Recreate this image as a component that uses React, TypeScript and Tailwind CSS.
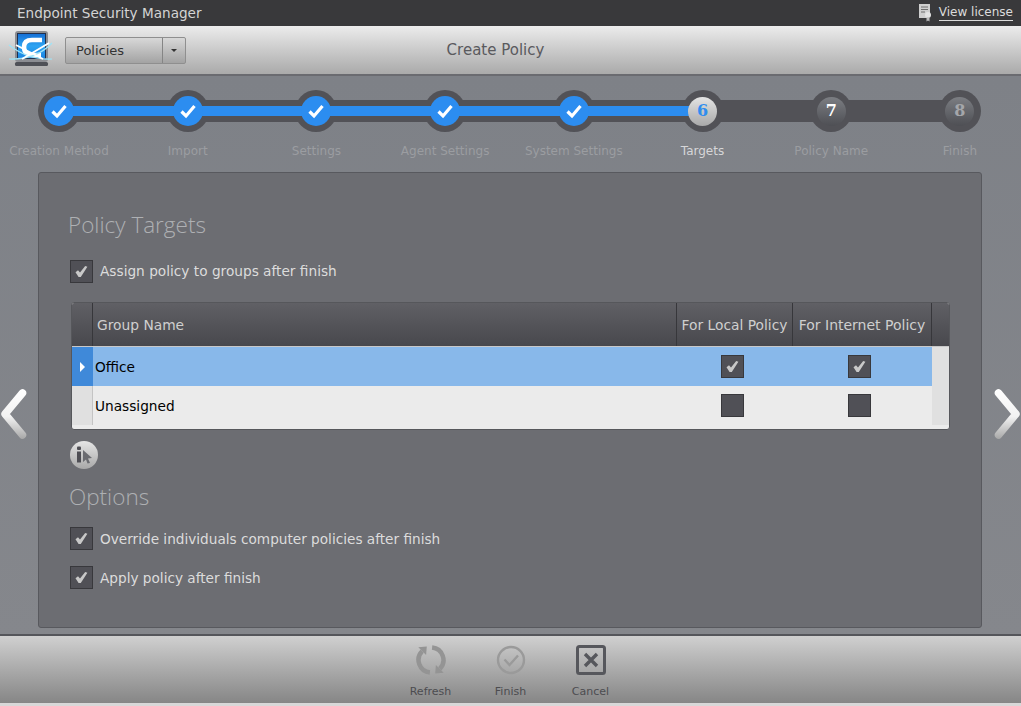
import React from 'react';

const font = 'font-["DejaVu_Sans",sans-serif]';

function StepCheck() {
    return (
        <svg width="18" height="16" viewBox="0 0 18 16" fill="none">
            <path d="M2.5 8.5 L7 13 L15.5 3" stroke="#fff" strokeWidth="3.2" />
        </svg>
    );
}

function Step({ label, state, num }: { label: string; state: 'done' | 'active' | 'next' | 'todo'; num?: number }) {
    return (
        <div className="w-[100px] flex flex-col items-center">
            <div className="w-[42px] h-[42px] rounded-full bg-[#525257] flex items-center justify-center">
                {state === 'done' && (
                    <div className="relative z-10 w-[30px] h-[30px] rounded-full bg-[#2c8df0] flex items-center justify-center">
                        <StepCheck />
                    </div>
                )}
                {state === 'active' && (
                    <div className="relative z-10 w-[29px] h-[29px] rounded-full bg-gradient-to-b from-[#e4e4e4] to-[#a9a9a9] flex items-center justify-center text-[16px] font-bold font-['DejaVu_Serif',serif] text-[#2f8def]">
                        {num}
                    </div>
                )}
                {state === 'next' && (
                    <div className="relative z-10 w-[29px] h-[29px] rounded-full bg-gradient-to-b from-[#7c7e83] to-[#4e4f54] flex items-center justify-center text-[16px] font-bold font-['DejaVu_Serif',serif] text-white">
                        {num}
                    </div>
                )}
                {state === 'todo' && (
                    <div className="relative z-10 w-[29px] h-[29px] rounded-full bg-gradient-to-b from-[#7c7e83] to-[#4e4f54] flex items-center justify-center text-[16px] font-bold font-['DejaVu_Serif',serif] text-[#a4a6aa]">
                        {num}
                    </div>
                )}
            </div>
            <div className={`mt-[11px] text-[12px] leading-[16px] whitespace-nowrap ${state === 'active' ? 'text-[#d6d6d8]' : 'text-[#9b9da1]'}`}>{label}</div>
        </div>
    );
}

function Check({ checked = true }: { checked?: boolean }) {
    return (
        <div className="w-[23px] h-[23px] shrink-0 bg-[#505056] border border-[#38383c] flex items-center justify-center">
            {checked && (
                <svg width="13" height="13" viewBox="0 0 13 13">
                    <path d="M0.5 7.2 L3 5.2 L5 7.4 L10.2 1 L12.4 1.8 L5.8 12 L3.6 12 Z" fill="#c8c8c8" />
                </svg>
            )}
        </div>
    );
}

function Chevron({ dir }: { dir: 'left' | 'right' }) {
    return (
        <svg width="28" height="52" viewBox="0 0 28 52" fill="none">
            <defs>
                <linearGradient id={`chev-${dir}`} gradientUnits="userSpaceOnUse" x1="0" y1="0" x2="0" y2="52">
                    <stop offset="0" stopColor="#ffffff" />
                    <stop offset="0.55" stopColor="#f2f2f2" />
                    <stop offset="1" stopColor="#a4a4a4" />
                </linearGradient>
            </defs>
            <path
                d={dir === 'left' ? 'M22.5 5 L5 26 L22.5 47' : 'M5.5 5 L23 26 L5.5 47'}
                stroke={`url(#chev-${dir})`}
                strokeWidth="7.5"
                strokeLinecap="round"
                strokeLinejoin="round"
            />
        </svg>
    );
}

function Logo() {
    return (
        <svg width="46" height="40" viewBox="0 0 46 40" fill="none">
            <defs>
                <linearGradient id="logo-screen" x1="0" y1="0" x2="0" y2="1">
                    <stop offset="0" stopColor="#1670d6" />
                    <stop offset="0.5" stopColor="#2ea4f2" />
                    <stop offset="1" stopColor="#1b86e2" />
                </linearGradient>
            </defs>
            <rect x="7" y="1" width="33" height="31" rx="3" fill="#8b8d92" />
            <rect x="9" y="3" width="29" height="26" fill="#20304e" />
            <rect x="10" y="4" width="27" height="24" fill="url(#logo-screen)" />
            <path d="M34 10 H24 Q16 10 16 17 Q16 24 23 25 H33" stroke="#fff" strokeWidth="4.6" fill="none" />
            <path d="M1 15 Q20 30 44 29" stroke="#9fe3f7" strokeWidth="1.2" />
            <path d="M44 13 Q28 30 1 29" stroke="#9fe3f7" strokeWidth="1.2" />
            <path d="M8 15 L35 29" stroke="#fff" strokeWidth="1.8" />
            <path d="M41 13 L14 29" stroke="#fff" strokeWidth="1.8" />
            <rect x="7" y="32" width="33" height="4" rx="1.5" fill="#4f5157" />
        </svg>
    );
}

function LicenseIcon() {
    return (
        <svg width="14" height="18" viewBox="0 0 14 18" fill="none">
            <path d="M1 0 H12 V10 H9 V14 H1 Z" fill="#cfcfcf" />
            <path d="M3 3 H10 M3 5.5 H10 M3 8 H7" stroke="#6e6e6e" strokeWidth="1" />
            <circle cx="10" cy="11" r="3" fill="#e4e4e4" />
            <path d="M8.5 13.5 V17.5 L10 16.5 L11.5 17.5 V13.5" fill="#bdbdbd" />
        </svg>
    );
}

function InfoIcon() {
    return (
        <div className="w-[28px] h-[28px] rounded-full bg-gradient-to-b from-[#e6e6e6] to-[#a8a8a8] flex items-center justify-center">
            <svg width="20" height="18" viewBox="0 0 20 18">
                <rect x="3" y="0.5" width="4" height="3.5" rx="1" fill="#4e4e54" />
                <rect x="3" y="5.5" width="4" height="11" fill="#4e4e54" />
                <path d="M9 4 L18 12 L14 12.5 L16 17 L13.5 17.5 L12 13.5 L9 16 Z" fill="#6a6b70" />
            </svg>
        </div>
    );
}

function ToolButton({ label, children }: { label: string; children: React.ReactNode }) {
    return (
        <div className="w-[80px] flex flex-col items-center">
            <div className="h-[30px] flex items-center justify-center">{children}</div>
            <div className="mt-[10px] text-[11px] leading-[14px] text-[#4c4c50]">{label}</div>
        </div>
    );
}

export default function App() {
    return (
        <div className={`w-[1021px] h-[706px] overflow-hidden flex flex-col bg-[#80838a] ${font}`}>
            {/* title bar */}
            <div className="h-[26px] shrink-0 bg-[#39393b] flex items-center justify-between pl-[17px] pr-[8px]">
                <div className="text-[13.6px] text-[#d4d4d4]">Endpoint Security Manager</div>
                <div className="flex items-center gap-[7px]">
                    <LicenseIcon />
                    <a className="text-[12px] leading-[15px] text-[#dcdcdc] border-b border-[#dcdcdc]">View license</a>
                </div>
            </div>

            {/* toolbar */}
            <div className="h-[50px] shrink-0 relative bg-gradient-to-b from-[#ececec] to-[#aaaaaa] border-b-2 border-[#6a6b70] flex items-center pl-[8px]">
                <Logo />
                <div className="ml-[11px] w-[121px] h-[27px] flex rounded-[2px] border border-[#8f8f8f] bg-gradient-to-b from-[#d8d8d8] to-[#a3a3a3]">
                    <div className="w-[96px] pl-[10px] text-[13px] leading-[26px] text-[#333]">Policies</div>
                    <div className="flex-1 border-l border-[#858585] flex items-center justify-center">
                        <div className="w-0 h-0 border-x-[3px] border-x-transparent border-t-[3px] border-t-[#333]" />
                    </div>
                </div>
                <div className="absolute inset-x-0 top-[15px] pr-[30px] text-center text-[15px] leading-[18px] text-[#5a5a5e]">Create Policy</div>
            </div>

            {/* wizard body */}
            <div className="flex-1 min-h-0 flex flex-col bg-gradient-to-b from-[#7e8187] to-[#85878c]">
                {/* stepper */}
                <div className="relative h-[96px] shrink-0 pt-[14px] pl-[9px] pr-[11px] flex justify-between">
                    <div className="absolute left-[59px] w-[901px] top-[24px] h-[22px] bg-[#525257]" />
                    <div className="absolute left-[59px] w-[630px] top-[30px] h-[10px] bg-[#2c8df0]" />
                    <Step label="Creation Method" state="done" />
                    <Step label="Import" state="done" />
                    <Step label="Settings" state="done" />
                    <Step label="Agent Settings" state="done" />
                    <Step label="System Settings" state="done" />
                    <Step label="Targets" state="active" num={6} />
                    <Step label="Policy Name" state="next" num={7} />
                    <Step label="Finish" state="todo" num={8} />
                </div>

                <div className="flex-1 min-h-0 flex">
                    <div className="w-[38px] shrink-0 h-[456px] flex items-center justify-center pt-[28px] pr-[10px]">
                        <Chevron dir="left" />
                    </div>

                    {/* panel */}
                    <div className="w-[944px] h-[456px] shrink-0 rounded-[3px] border border-[#58595e] bg-[#6c6d72] pl-[29px] pr-[31px] pt-[36px]">
                        <h2 className="font-['Open_Sans',sans-serif] font-light text-[22.5px] leading-[32px] text-[#aeb0b3]">Policy Targets</h2>
                        <div className="mt-[19px] flex items-center gap-[7px] pl-[2px]">
                            <Check />
                            <span className="text-[13.7px] text-[#dcdcdc]">Assign policy to groups after finish</span>
                        </div>

                        {/* table */}
                        <div className="mt-[19px] ml-[3px] w-[879px] h-[128px] rounded-[3px] overflow-hidden border border-[#56575b] bg-[#ebebeb]">
                            <div className="h-[44px] flex bg-gradient-to-b from-[#606065] to-[#48484d] text-[13.8px] text-[#cfcfcf] border-b border-[#c8c8c8]">
                                <div className="w-[21px] border-r border-[#37373b]" />
                                <div className="w-[584px] border-r border-[#37373b] pl-[4px] leading-[44px]">Group Name</div>
                                <div className="w-[116px] border-r border-[#37373b] text-center leading-[44px] whitespace-nowrap">For Local Policy</div>
                                <div className="w-[139px] border-r border-[#37373b] text-center text-[14px] leading-[44px] whitespace-nowrap">For Internet Policy</div>
                                <div className="flex-1" />
                            </div>
                            <div className="h-[39px] flex bg-[#88b8ea]">
                                <div className="w-[21px] bg-[#3f89d9] flex items-center justify-center">
                                    <div className="w-0 h-0 border-y-[5px] border-y-transparent border-l-[5px] border-l-white" />
                                </div>
                                <div className="w-[584px] pl-[2px] text-[13.7px] leading-[41px] text-black">Office</div>
                                <div className="w-[116px] pr-[5px] flex items-center justify-center"><Check /></div>
                                <div className="w-[139px] pr-[7px] flex items-center justify-center"><Check /></div>
                                <div className="flex-1 bg-[#e0e0e0]" />
                            </div>
                            <div className="h-[39px] flex">
                                <div className="w-[21px] bg-[#e0e0e0] border-r border-[#c4c4c4]" />
                                <div className="w-[584px] pl-[2px] text-[13.7px] leading-[41px] text-black">Unassigned</div>
                                <div className="w-[116px] pr-[5px] flex items-center justify-center"><Check checked={false} /></div>
                                <div className="w-[139px] pr-[7px] flex items-center justify-center"><Check checked={false} /></div>
                                <div className="flex-1 bg-[#e0e0e0]" />
                            </div>
                        </div>

                        <div className="mt-[11px] ml-[2px]"><InfoIcon /></div>
                        <h2 className="mt-[12px] pl-[1px] font-['Open_Sans',sans-serif] font-light text-[22.5px] leading-[32px] text-[#aeb0b3]">Options</h2>
                        <div className="mt-[14px] flex items-center gap-[7px] pl-[2px]">
                            <Check />
                            <span className="pt-[1px] text-[13.65px] text-[#dcdcdc]">Override individuals computer policies after finish</span>
                        </div>
                        <div className="mt-[16px] flex items-center gap-[7px] pl-[2px]">
                            <Check />
                            <span className="pt-[1px] text-[13.65px] text-[#dcdcdc]">Apply policy after finish</span>
                        </div>
                    </div>

                    <div className="flex-1 h-[456px] flex items-center justify-center pt-[28px] pl-[10px]">
                        <Chevron dir="right" />
                    </div>
                </div>
            </div>

            {/* bottom bar */}
            <div className="h-[72px] shrink-0 border-t-2 border-[#55565b] bg-gradient-to-b from-[#d0d0d0] to-[#868686] flex justify-center pt-[9px] border-b-[3px] border-b-[#d8d8d8]">
                <ToolButton label="Refresh">
                    <svg width="30" height="30" viewBox="0 0 30 30" fill="none">
                        <path d="M13.9 27.45 A12.5 12.5 0 0 1 6.2 6.2" stroke="#949494" strokeWidth="4.5" />
                        <path d="M16.1 2.55 A12.5 12.5 0 0 1 23.8 23.8" stroke="#949494" strokeWidth="4.5" />
                        <path d="M2.3 2.3 L10.8 1.6 L10.1 10.1 Z" fill="#949494" />
                        <path d="M27.7 27.7 L19.2 28.4 L19.9 19.9 Z" fill="#949494" />
                    </svg>
                </ToolButton>
                <ToolButton label="Finish">
                    <svg width="30" height="30" viewBox="0 0 30 30" fill="none">
                        <circle cx="15" cy="15" r="13" stroke="#9a9a9a" strokeWidth="2.4" />
                        <path d="M8.5 14.5 L13.5 20 L22 10.5" stroke="#9a9a9a" strokeWidth="2.4" />
                    </svg>
                </ToolButton>
                <ToolButton label="Cancel">
                    <svg width="30" height="30" viewBox="0 0 30 30" fill="none">
                        <rect x="1.5" y="1.5" width="27" height="27" rx="2" stroke="#56575c" strokeWidth="3" />
                        <path d="M9 9 L21 21 M21 9 L9 21" stroke="#56575c" strokeWidth="3.4" />
                    </svg>
                </ToolButton>
            </div>
        </div>
    );
}
